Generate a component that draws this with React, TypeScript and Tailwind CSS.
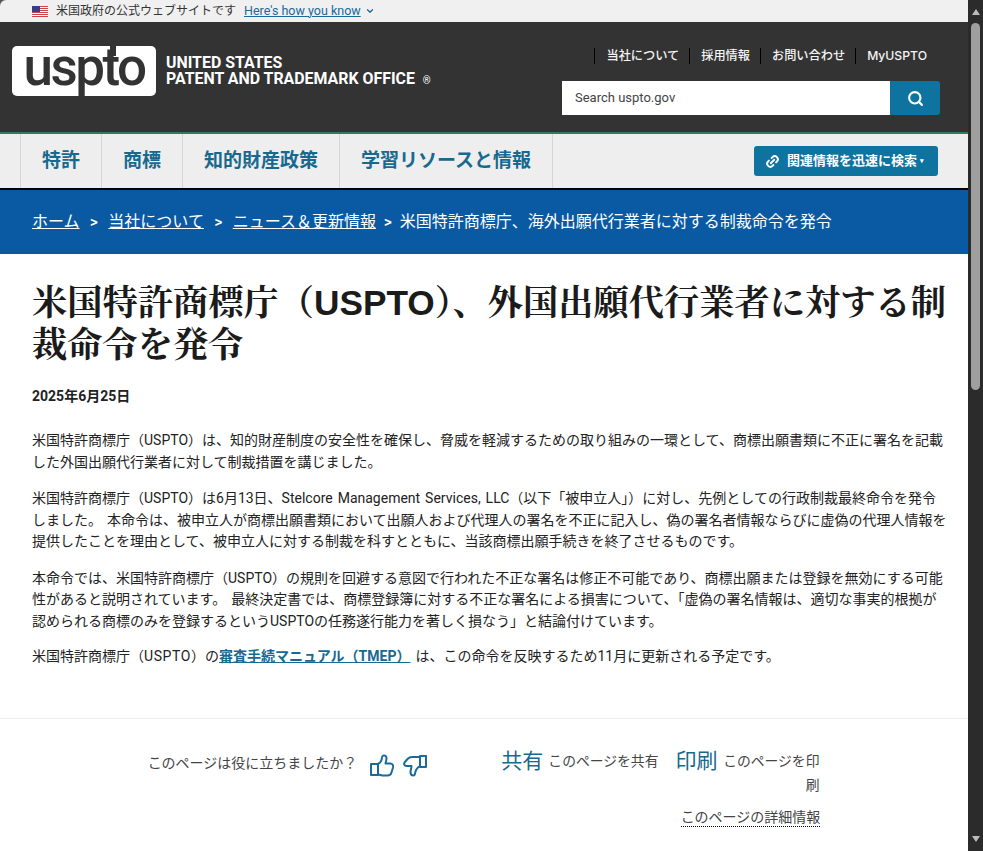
import { ChevronDown, Link2, Search } from 'lucide-react';

const sans = 'font-["Roboto","Noto_Sans_CJK_JP",sans-serif]';

function Flag() {
  return (
    <svg width="16" height="11" viewBox="0 0 16 11" className="shrink-0">
      <rect width="16" height="11" fill="#fff" />
      {[0, 2, 4, 6, 8, 10].map(y => (
        <rect key={y} y={y} width="16" height="1" fill="#c8474a" />
      ))}
      <rect width="8" height="6" fill="#3c3b8e" />
    </svg>
  );
}

function ThumbUp() {
  return (
    <svg width="24" height="23" viewBox="0 0 24 23" fill="none" stroke="#1a6a9a" strokeWidth="2" strokeLinejoin="round">
      <rect x="1" y="10" width="7" height="11" />
      <path d="M8 10c2-1 3-2 3.500-4 .5-2 0-4 2-4.500 2-.5 3 1 3 3 0 2-1 4-1 5h5c2 0 3 2 2.500 4l-1.500 5c-.5 2-2 3-4 3h-4c-2 0-4-1-5.500-1" />
    </svg>
  );
}

function ThumbDown() {
  return (
    <svg width="24" height="23" viewBox="0 0 24 23" fill="none" stroke="#1a6a9a" strokeWidth="2" strokeLinejoin="round">
      <rect x="17" y="2" width="6" height="11" />
      <path d="M17 3h-8c-2 0-3 .5-4.500 2l-3 3.500c-1 1.500 0 3.500 2 3.500h5c0 2-1 4-1 6 0 2 1 3.500 3 3.500 1.500 0 1.500-2 2-4 .5-2 2-4 4.500-5.500" />
    </svg>
  );
}

export default function App() {
  return (
    <div className={`flex h-[851px] overflow-hidden bg-[#555] ${sans}`}>
      <div className="flex min-w-0 flex-1 flex-col">
        <div className="flex h-[22px] items-center gap-2 rounded-tl-[6px] bg-[#f0f0f0] pl-[32px] text-[12px] text-[#333]">
          <Flag />
          <span>米国政府の公式ウェブサイトです</span>
          <a className="text-[12.500px] text-[#1a6a9a] underline">Here's how you know</a>
          <ChevronDown size={10} strokeWidth={3} className="-ml-1 text-[#1a6a9a]" />
        </div>

        <header className="flex h-[110px] justify-between bg-[#333] pl-3 pr-[28px] text-white">
          <div className="flex items-start pt-[24px]">
            <div className="relative flex h-[50px] w-[144px] items-center justify-center rounded-[5px] bg-white text-[53px] leading-none font-medium text-[#333]">
              <span className="-mt-[8px] tracking-[-2.500px]">uspto</span>
              <span className="absolute left-[98px] top-0 h-[10px] w-[6px] bg-[#333]" />
            </div>
            <div className="ml-[10px] mt-[9px] text-[15.900px] leading-[16px] font-bold">
              <div>UNITED STATES</div>
              <div>
                PATENT AND TRADEMARK OFFICE <span className="ml-1 text-[10px] font-normal">®</span>
              </div>
            </div>
          </div>
          <div className="flex flex-col items-end pt-[26px]">
            <nav className="flex pr-[13px] font-['Inter','Noto_Sans_CJK_JP',sans-serif] text-[12.200px] leading-[16px] font-medium text-[#f4f4f4]">
              {['当社について', '採用情報', 'お問い合わせ', 'MyUSPTO'].map(item => (
                <span key={item} className="border-l border-black pl-[11px] pr-[10px] last:pr-0">
                  {item}
                </span>
              ))}
            </nav>
            <div className="mt-[17px] flex h-[34px] w-[378px]">
              <div className="flex flex-1 items-center bg-white pl-[13px] text-[13px] text-[#444]">Search uspto.gov</div>
              <div className="flex w-[50px] items-center justify-center rounded-r-[3px] bg-[#0f73a0]">
                <Search size={17} strokeWidth={3} />
              </div>
            </div>
          </div>
        </header>

        <nav className="flex h-[58px] items-stretch justify-between border-t-2 border-b-2 border-t-[#2e7d5b] border-b-black bg-[#eee] pl-[20px] pr-[30px]">
          <div className="flex border-l border-[#d5d5d5] text-[19px] font-bold text-[#17698f]">
            <span className="flex items-center border-r border-[#d5d5d5] px-[21px]">特許</span>
            <span className="flex items-center border-r border-[#d5d5d5] px-[21px]">商標</span>
            <span className="flex items-center border-r border-[#d5d5d5] px-[21px]">知的財産政策</span>
            <span className="flex items-center border-r border-[#d5d5d5] px-[21px]">学習リソースと情報</span>
          </div>
          <div className="flex items-center">
            <button className="flex h-[30px] w-[184px] items-center gap-[7px] rounded-[3px] bg-[#0f73a0] pl-[11px] text-[13px] font-bold text-white">
              <Link2 size={15} strokeWidth={3} className="-rotate-45" />
              <span>関連情報を迅速に検索</span>
              <span className="-ml-[4px] text-[7px]">▾</span>
            </button>
          </div>
        </nav>

        <div className="flex h-[64px] items-center gap-[7px] bg-[#0a5aa3] pb-px pl-[32px] text-[16px] text-white">
          <a className="underline">ホーム</a>
          <span className="mx-[3px] font-['Inter',sans-serif] text-[13px] font-bold">&gt;</span>
          <a className="underline">当社について</a>
          <span className="mx-[3px] font-['Inter',sans-serif] text-[13px] font-bold">&gt;</span>
          <a className="underline">ニュース＆更新情報</a>
          <span className="mx-[0.500px] font-['Inter',sans-serif] text-[13px] font-bold">&gt;</span>
          <span>米国特許商標庁、海外出願代行業者に対する制裁命令を発令</span>
        </div>

        <main className="flex-1 bg-white pl-[32px] pr-[21px] pt-[28px] text-[14px] leading-[21.500px] text-[#222] [word-spacing:1.500px]">
          <h1 className="font-['Liberation_Sans','Noto_Serif_CJK_JP','Noto_Sans_CJK_JP',serif] text-[35.250px] leading-[42px] font-bold text-[#1b1b1b]">
            米国特許商標庁（USPTO）、外国出願代行業者に対する制裁命令を発令
          </h1>
          <p className="mt-[21px] text-[14px] leading-[18px] font-bold">2025年6月25日</p>
          <p className="mt-[25px]">
            米国特許商標庁（USPTO）は、知的財産制度の安全性を確保し、脅威を軽減するための取り組みの一環として、商標出願書類に不正に署名を記載した外国出願代行業者に対して制裁措置を講じました。
          </p>
          <p className="mt-[15px]">
            米国特許商標庁（USPTO）は6月13日、Stelcore Management Services, LLC（以下「被申立人」）に対し、先例としての行政制裁最終命令を発令しました。 本命令は、被申立人が商標出願書類において出願人および代理人の署名を不正に記入し、偽の署名者情報ならびに虚偽の代理人情報を提供したことを理由として、被申立人に対する制裁を科すとともに、当該商標出願手続きを終了させるものです。
          </p>
          <p className="mt-[15px]">
            本命令では、米国特許商標庁（USPTO）の規則を回避する意図で行われた不正な署名は修正不可能であり、商標出願または登録を無効にする可能性があると説明されています。 最終決定書では、商標登録簿に対する不正な署名による損害について、「虚偽の署名情報は、適切な事実的根拠が認められる商標のみを登録するというUSPTOの任務遂行能力を著しく損なう」と結論付けています。
          </p>
          <p className="mt-[14px]">
            米国特許商標庁（<span className="tracking-[0.6px]">USPTO</span>）の<a className="font-bold text-[#17698f] underline">審査手続マニュアル（TMEP）</a> は、この命令を反映するため11月に更新される予定です。
          </p>
        </main>

        <footer className="flex h-[133px] justify-center border-t border-[#eee] bg-white pt-[28px] text-[14px] text-[#444]">
          <div className="mt-px flex h-[30px] items-center">
            <span>このページは役に立ちましたか？</span>
            <span className="ml-[13px] mt-1"><ThumbUp /></span>
            <span className="ml-[9px] mt-1"><ThumbDown /></span>
          </div>
          <div className="ml-[74px] flex w-[319px] flex-col items-end">
            <div className="flex w-full items-start">
              <span className="shrink-0 text-[21px] leading-[28px] text-[#17698f]">共有</span>
              <span className="ml-[5px] mt-[2px] shrink-0 text-[13.800px] leading-[24px] whitespace-nowrap">このページを共有</span>
              <span className="ml-[17px] shrink-0 text-[21px] leading-[28px] text-[#17698f]">印刷</span>
              <span className="ml-[5px] mt-[2px] w-[97px] shrink-0 text-right text-[13.800px] leading-[24px]">このページを印刷</span>
            </div>
            <a className="mt-[12px] border-b border-dotted border-black leading-[17px]">このページの詳細情報</a>
          </div>
        </footer>
      </div>

      <aside className="flex w-[15px] shrink-0 flex-col items-center bg-[#2b2b2b] py-[9px]">
        <span className="h-0 w-0 border-x-[4px] border-b-[6px] border-x-transparent border-b-[#bbb]" />
        <span className="mt-[8px] h-[367px] w-[9px] rounded-full bg-[#9f9f9f]" />
        <span className="mt-auto h-0 w-0 border-x-[4px] border-t-[6px] border-x-transparent border-t-[#bbb]" />
      </aside>
    </div>
  );
}
